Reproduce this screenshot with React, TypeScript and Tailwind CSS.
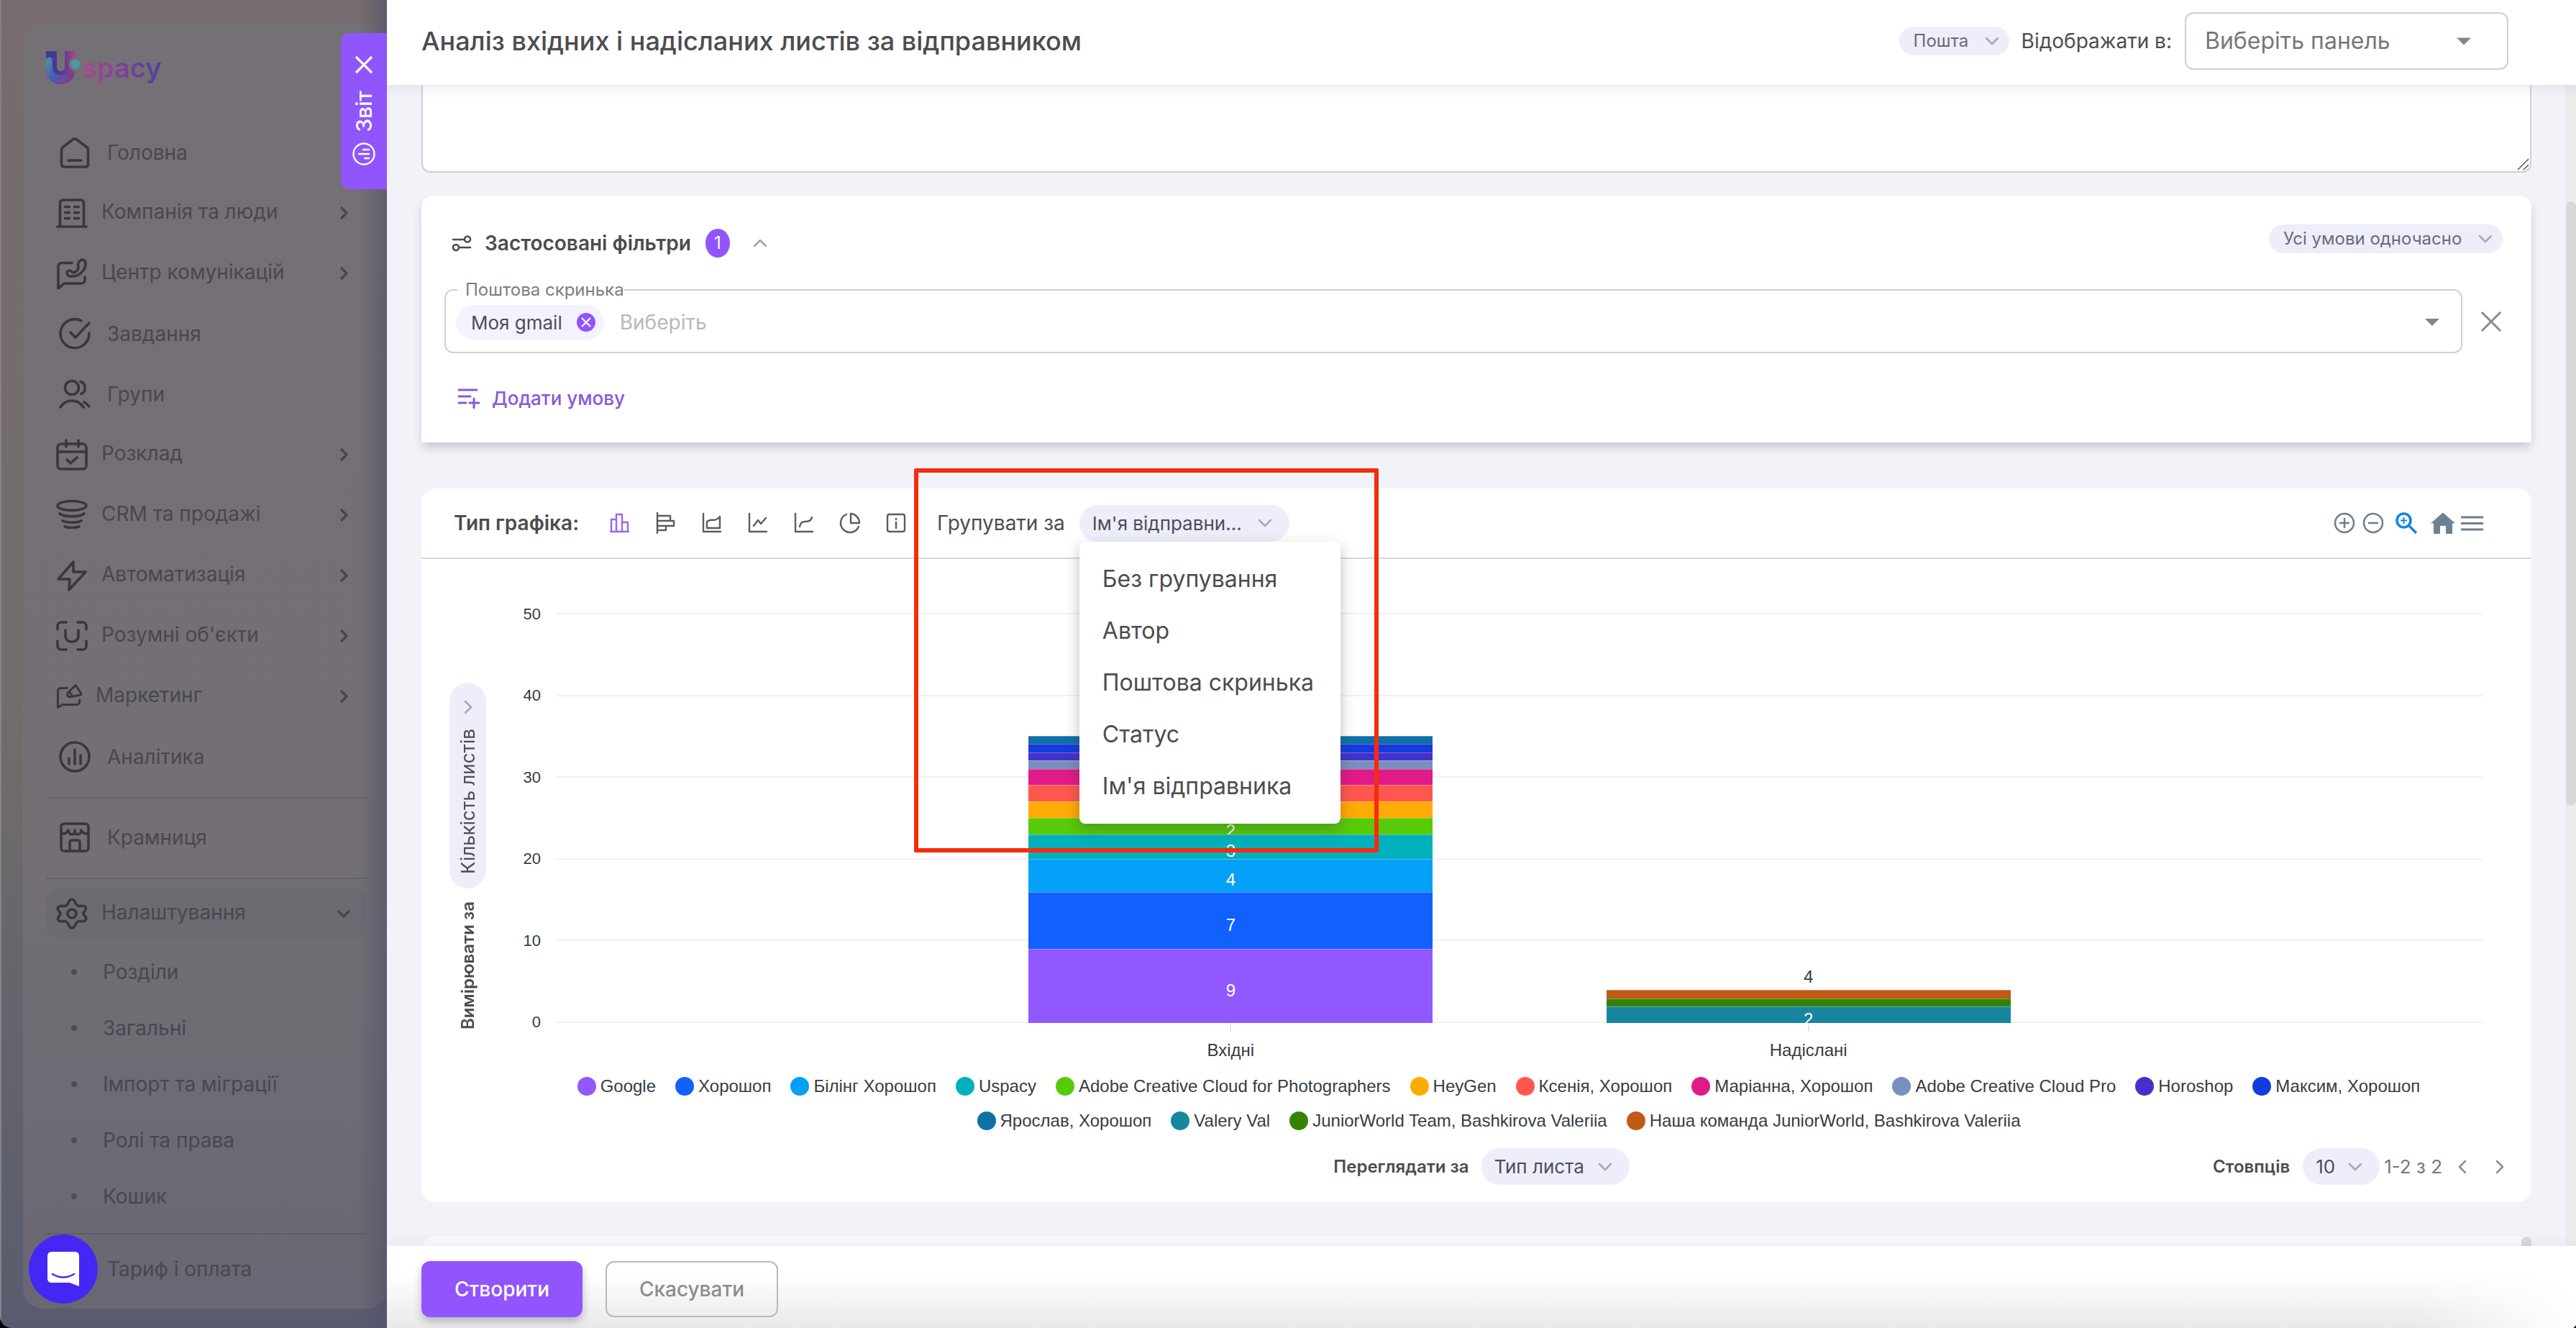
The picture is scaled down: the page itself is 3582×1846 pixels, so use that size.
import React from "react";

type IconName =
  | "home" | "company" | "comm" | "tasks" | "groups" | "calendar" | "crm"
  | "bolt" | "smart" | "marketing" | "analytics" | "store" | "settings";

const ICONS: Record<IconName, React.ReactNode> = {
  home: <path d="M3.500 18q0-2 1.600-3.200L20 3.500q2-1.400 4 0L38.900 14.800q1.600 1.200 1.600 3.200V38q0 4-4 4H7.500q-4 0-4-4ZM13 33h18" />,
  company: <path d="M1.800 41h40.400M5.500 41V8a4 4 0 0 1 4-4h25a4 4 0 0 1 4 4v33M12.500 13.500h6M25.500 13.500h6M12.500 21.500h6M25.500 21.500h6M12.500 29.500h6M25.500 29.500h6" />,
  comm: <path d="M22 7.500H8a5 5 0 0 0-5 5V43l8-7h24a5 5 0 0 0 5-5v-4M34 4c3-2 7 0 7 4 0 10-9 18-18 18-5 1-8-2-8-5 1-3 5-4 7-1l2 1c4-1 7-4 7-8-1-3 0-7 3-9Z" />,
  tasks: <path d="M31 3.800A20 20 0 1 0 42 21M16 20l7 7L42 7" />,
  groups: (
    <>
      <circle cx="18" cy="13" r="9.500" />
      <path d="M2 40c8-12 24-12 32 0M30 4.500c8 2 8 14 1 17M35 33q4 2 7 6" />
    </>
  ),
  calendar: <path d="M7 7h30a5 5 0 0 1 5 5v25a5 5 0 0 1-5 5H7a5 5 0 0 1-5-5V12a5 5 0 0 1 5-5ZM2 18h40M14 2v9M31 2v9M15 29l5 5 9-8" />,
  crm: (
    <>
      <ellipse cx="22" cy="9" rx="20" ry="6.500" />
      <path d="M5 20c6 5 28 5 34 0M9 30c5 3 21 3 26 0M12 38c5 2 15 2 20 0" />
    </>
  ),
  bolt: <path d="M24 3 3 27h16l-1 15 23-25H24Z" />,
  smart: <path d="M2 13V8a5 5 0 0 1 5-5h7M30 3h7a5 5 0 0 1 5 5v5M42 29v7a5 5 0 0 1-5 5h-7M14 41H7a5 5 0 0 1-5-5v-7M13 14v8c0 11 18 11 18 0v-8" />,
  marketing: <path d="M19 8H8a5 5 0 0 0-5 5v28l8-5h24a5 5 0 0 0 5-5v-3M33 3l11 16-20 4c-5 0-7-5-3-8ZM23 15l5 7" />,
  analytics: (
    <>
      <circle cx="22" cy="22" r="20" />
      <path d="M14 24v8M22 12v20M30 20v12" />
    </>
  ),
  store: <path d="M7 3h30a4 4 0 0 1 4 4v30a4 4 0 0 1-4 4H7a4 4 0 0 1-4-4V7a4 4 0 0 1 4-4ZM3 15q5 5 10-3 1 6 5 6 4 0 4-6 0 6 4 6t5-6q5 8 10 3M15 41V29q0-3 3-3h8q3 0 3 3v12" />,
  settings: (
    <>
      <path d="M22 2c5 0 4 7 8 9s9-2 11 2-3 6-3 9 6 5 3 9-7 0-11 2-3 9-8 9-4-7-8-9-9 2-11-2 3-6 3-9-6-5-3-9 7 0 11-2 3-9 8-9Z" />
      <circle cx="22" cy="22" r="6" />
    </>
  ),
};

function NavIcon({ name }: { name: IconName }) {
  return (
    <svg viewBox="0 0 44 44" className={name === "marketing" ? "size-9 shrink-0" : "size-11 shrink-0"} fill="none" stroke="#3a363c" strokeWidth="3.600" strokeLinecap="round" strokeLinejoin="round">
      {ICONS[name]}
    </svg>
  );
}

function Chevron({ className = "" }: { className?: string }) {
  return (
    <svg viewBox="0 0 20 12" className={"h-3 w-5 shrink-0 " + className} fill="none" stroke="currentColor" strokeWidth="2.500" strokeLinecap="round" strokeLinejoin="round">
      <path d="M2 2l8 8 8-8" />
    </svg>
  );
}

function NavItem({ icon, label, expandable = false, open = false }: { icon?: IconName; label: string; expandable?: boolean; open?: boolean }) {
  if (expandable) {
    return (
      <button type="button" aria-expanded={open} className="flex h-[84px] w-full items-center py-1.5 text-left text-[28px]">
        <span className={"flex h-full w-full items-center gap-[19px] rounded-[20px] pr-[22px] pl-3.5 " + (open ? "bg-[#6d6a72]" : "")}>
          {icon && <NavIcon name={icon} />}
          <span className="flex-1 pb-1">{label}</span>
          <svg viewBox="0 0 20 20" className={"size-5 " + (open ? "rotate-90" : "")} fill="none" stroke="#4a4650" strokeWidth="3.500" strokeLinejoin="round">
            <path d="M6 2l8 8-8 8" />
          </svg>
        </span>
      </button>
    );
  }
  return (
    <a href="#" className="flex h-[84px] items-center gap-[23px] pl-[18px] text-[28px]">
      {icon ? <NavIcon name={icon} /> : <span className="w-11" />}
      {label}
    </a>
  );
}

function Sidebar() {
  const subItems = ["Розділи", "Загальні", "Імпорт та міграції", "Ролі та права", "Кошик"];
  return (
    <aside className="relative flex w-[538px] shrink-0 flex-col overflow-hidden border-l-2 border-[#888287] bg-linear-to-b from-[#776c6f] via-[#716c6b] via-55% to-[#585c6e] pt-8 pb-[27px] pl-[30px] text-[#4a4650]">
      <div className="flex min-h-0 flex-1 flex-col rounded-[28px] bg-linear-to-b from-[#757075] via-[#736f74] via-65% to-[#686773] pr-7 pl-8">
        <div className="flex h-[138px] items-start pt-[39px]">
          <svg viewBox="0 0 50 46" className="h-[46px] w-[50px]">
            <defs>
              <linearGradient id="logoU" x1="0" y1="0" x2="1" y2="0">
                <stop offset="0" stopColor="#43369a" />
                <stop offset="0.500" stopColor="#4b3796" />
                <stop offset="1" stopColor="#a8458e" />
              </linearGradient>
              <linearGradient id="logoSwash" x1="0" y1="0" x2="1" y2="0.600">
                <stop offset="0" stopColor="#4f96a4" />
                <stop offset="0.500" stopColor="#4a5cac" />
                <stop offset="1" stopColor="#7e3c8f" />
              </linearGradient>
            </defs>
            <path fill="url(#logoU)" d="M0 0h15v22c0 8 11 8 11 0V0h15v26c0 13-10 20-20.500 20S0 38 0 26Z" />
            <path fill="url(#logoSwash)" d="M0 13c0-6 9-6 9 0v10c0 8 7 10 12 10 6 0 11-2 14-7l5 4c-2 11-10 16-19.500 16S0 40 0 26Z" />
            <circle cx="41" cy="18" r="9.500" fill="#757075" />
            <circle cx="41" cy="18" r="6.500" fill="#4f9aa8" />
          </svg>
          <span className="bg-linear-to-r from-[#ac488e] via-[#7f4198] to-[#4c3fa2] bg-clip-text pb-3 text-[38px] leading-[46px] font-semibold text-transparent">spacy</span>
        </div>
        <nav className="flex flex-col">
          <NavItem icon="home" label="Головна" />
          <NavItem icon="company" label="Компанія та люди" expandable />
          <NavItem icon="comm" label="Центр комунікацій" expandable />
          <NavItem icon="tasks" label="Завдання" />
          <NavItem icon="groups" label="Групи" />
          <NavItem icon="calendar" label="Розклад" expandable />
          <NavItem icon="crm" label="CRM та продажі" expandable />
          <NavItem icon="bolt" label="Автоматизація" expandable />
          <NavItem icon="smart" label="Розумні об'єкти" expandable />
          <NavItem icon="marketing" label="Маркетинг" expandable />
          <NavItem icon="analytics" label="Аналітика" />
          <hr className="mt-3.5 mb-3 border-t-2 border-[#666269]" />
          <NavItem icon="store" label="Крамниця" />
          <hr className="mt-3.5 mb-1.5 border-t-2 border-[#666269]" />
          <NavItem icon="settings" label="Налаштування" expandable open />
          <ul>
            {subItems.map((s) => (
              <li key={s}>
                <a href="#" className="flex h-[78px] items-center gap-9 pl-[35px] text-[28px]">
                  <span className="size-2 rounded-full bg-[#4f4b55]" />
                  {s}
                </a>
              </li>
            ))}
          </ul>
          <hr className="mt-3 mb-1.5 border-t-2 border-[#5f5c66]" />
          <NavItem label="Тариф і оплата" />
        </nav>
      </div>
      <div className="pointer-events-none absolute inset-y-0 right-0 w-10 bg-linear-to-r from-transparent to-[#54506a]/60" />
      <button type="button" aria-label="Чат" className="absolute bottom-[34px] left-[38px] flex size-24 items-center justify-center rounded-full bg-[#4527f5]">
        <svg viewBox="0 0 44 48" className="h-12 w-11">
          <path fill="#fff" d="M6 0h32q6 0 6 6v42L31 43H6q-6 0-6-6V6q0-6 6-6Z" />
          <path fill="none" stroke="#4527f5" strokeWidth="2.500" strokeLinecap="round" d="M7 31q15 9 30 0" />
        </svg>
      </button>
      <div className="absolute top-[46px] right-0 flex h-[217px] w-16 flex-col items-center gap-5 rounded-l-xl bg-[#9155fd] pt-7 text-white">
        <button type="button" aria-label="Закрити">
          <svg viewBox="0 0 32 32" className="size-8" fill="none" stroke="#fff" strokeWidth="3.200">
            <path d="M5 5l22 22M27 5L5 27" />
          </svg>
        </button>
        <span className="rotate-180 text-[30px] leading-8 font-medium [writing-mode:vertical-rl]">Звіт</span>
        <svg viewBox="0 0 32 32" className="-mt-1.5 size-8 -rotate-90" fill="none" stroke="#fff" strokeWidth="2.400" strokeLinecap="round">
          <circle cx="16" cy="16" r="14.500" />
          <path d="M10 17v6M16 9v14M22 15v8" />
        </svg>
      </div>
    </aside>
  );
}

function PillSelect({ id, value, small = false }: { id: string; value: string; small?: boolean }) {
  return (
    <span className={"relative flex items-center rounded-full bg-[#edeefa] " + (small ? "h-10 text-[24px] text-[#6b6a76]" : "h-[51px] text-[26px] text-[#4d4c58]")}>
      <select id={id} aria-label={value} className={"h-full appearance-none bg-transparent " + (small ? "pr-14 pl-5" : "pr-[62px] pl-[18px]")}>
        <option>{value}</option>
      </select>
      <Chevron className={"pointer-events-none absolute text-[#a9a8b5] " + (small ? "right-3.5" : "right-6")} />
    </span>
  );
}

function Header() {
  return (
    <header className="relative z-10 flex h-[118px] shrink-0 items-center bg-white pr-[94px] pb-1 pl-12 shadow-[0_4px_16px_rgba(90,90,140,0.12)]">
      <h1 className="flex-1 text-[36px] font-medium text-[#4c4c50]">Аналіз вхідних і надісланих листів за відправником</h1>
      <PillSelect id="source" value="Пошта" small />
      <label htmlFor="panel" className="mr-[18px] ml-[17px] text-[28px] text-[#4c4c50]">Відображати в:</label>
      <span className="relative flex items-center">
        <select id="panel" className="h-20 w-[450px] appearance-none rounded-xl border-2 border-[#d0d0d2] bg-white pl-[26px] text-[32px] text-[#77777a]">
          <option>Виберіть панель</option>
        </select>
        <svg viewBox="0 0 20 10" className="pointer-events-none absolute right-[52px] h-[11px] w-5" fill="#858588">
          <path d="M0 0h20L10 10Z" />
        </svg>
      </span>
    </header>
  );
}

function Filters() {
  return (
    <section className="mt-8 flex flex-col rounded-t-2xl bg-white pt-10 pr-10 pb-[38px] pl-8 shadow-[0_8px_14px_-2px_rgba(70,70,90,0.28)]">
      <div className="flex h-[52px] items-start justify-between pl-2.5">
        <button type="button" className="flex h-full items-center text-[28px] font-semibold text-[#4c4c50]">
          <svg viewBox="0 0 28 24" className="mr-[18px] h-6 w-7" fill="none" stroke="#4c4c50" strokeWidth="2.600" strokeLinecap="round">
            <path d="M2 7h15M11 18h15" />
            <circle cx="22" cy="6.500" r="4" />
            <circle cx="6" cy="18" r="4" />
          </svg>
          Застосовані фільтри
          <span className="ml-5 flex h-10 w-[34px] items-center justify-center rounded-[50%] bg-[#9155fd] text-[24px] font-normal text-white">1</span>
          <Chevron className="ml-8 rotate-180 text-[#a3a3a8]" />
        </button>
        <PillSelect id="match" value="Усі умови одночасно" small />
      </div>
      <div className="mt-[25px] flex items-end">
        <fieldset className="relative min-w-0 flex-1 rounded-xl border-2 border-[#d0d0d2] px-4 pb-[10px]">
          <legend className="pl-[11px] text-[24px] leading-7 text-[#7d7d80]">
            <label htmlFor="mailbox">Поштова скринька</label>
          </legend>
          <div className="flex h-[62px] items-center">
            <span className="-ml-0.5 flex h-12 items-center gap-5 rounded-full bg-[#f5f2ff] pr-3 pl-[21px] text-[26px] text-[#4d4c58]">
              Моя gmail
              <button type="button" aria-label="Прибрати">
                <svg viewBox="0 0 26 26" className="size-[26px]">
                  <circle cx="13" cy="13" r="13" fill="#9155fd" />
                  <path d="M7 7l12 12M19 7L7 19" stroke="#fff" strokeWidth="2.200" />
                </svg>
              </button>
            </span>
            <input id="mailbox" placeholder="Виберіть" className="ml-[22px] min-w-0 flex-1 text-[28px] outline-none placeholder:text-[#b9b9bb]" />
            <svg viewBox="0 0 20 10" className="mr-3.5 h-[10px] w-5" fill="#858588">
              <path d="M0 0h20L10 10Z" />
            </svg>
          </div>
        </fieldset>
        <button type="button" aria-label="Видалити умову" className="mb-7 ml-6">
          <svg viewBox="0 0 32 32" className="size-8" fill="none" stroke="#8a8a8d" strokeWidth="3">
            <path d="M3 3l26 26M29 3L3 29" />
          </svg>
        </button>
      </div>
      <button type="button" className="mt-[38px] ml-[18px] flex h-12 items-center gap-4 self-start text-[26px] font-medium text-[#8a57dc]">
        <svg viewBox="0 0 32 30" className="h-[30px] w-8" fill="none" stroke="#8a57dc" strokeWidth="3" strokeLinecap="round">
          <path d="M2 4h25M2 13h16M2 22h10M23 16v13M17 22h13" />
        </svg>
        Додати умову
      </button>
    </section>
  );
}

const SERIES = [
  { name: "Google", dot: "bg-[#9158ff]" },
  { name: "Хорошоп", dot: "bg-[#1061fd]" },
  { name: "Білінг Хорошоп", dot: "bg-[#05a0f7]" },
  { name: "Uspacy", dot: "bg-[#00b0bc]" },
  { name: "Adobe Creative Cloud for Photographers", dot: "bg-[#57cb08]" },
  { name: "HeyGen", dot: "bg-[#ffaa05]" },
  { name: "Ксенія, Хорошоп", dot: "bg-[#ff5750]" },
  { name: "Маріанна, Хорошоп", dot: "bg-[#e01a87]" },
  { name: "Adobe Creative Cloud Pro", dot: "bg-[#7890bd]" },
  { name: "Horoshop", dot: "bg-[#4530cd]" },
  { name: "Максим, Хорошоп", dot: "bg-[#143cdc]" },
  { name: "Ярослав, Хорошоп", dot: "bg-[#0f70a6]" },
  { name: "Valery Val", dot: "bg-[#17869e]" },
  { name: "JuniorWorld Team, Bashkirova Valeriia", dot: "bg-[#358305]" },
  { name: "Наша команда JuniorWorld, Bashkirova Valeriia", dot: "bg-[#c05a14]" },
];

const BARS = [
  { label: "Вхідні", values: [9, 7, 4, 3, 2, 2, 2, 2, 1, 1, 1, 1, 0, 0, 0], total: "" },
  { label: "Надіслані", values: [0, 0, 0, 0, 0, 0, 0, 0, 0, 0, 0, 0, 2, 1, 1], total: "4" },
];

const MAX = 50;

const CHART_TYPES = [
  { label: "Стовпчики", active: true, d: "M3 10h7v17H3ZM10 3h8v24h-8ZM18 14h8v13h-8ZM2 27h25" },
  { label: "Смуги", active: false, d: "M3 1v28M3 5h18v7H3M3 12h23v7H3M3 19h12v6H3" },
  { label: "Області", active: false, d: "M3 2v25h24M8 22V13q5-3 9-2 5 0 9-5v16Z" },
  { label: "Лінії", active: false, d: "M3 2v25h24M9 19l6-8 4 5 7-8" },
  { label: "Криві", active: false, d: "M3 2v25h24M9 20q1-7 8-7 8 0 9-6" },
  { label: "Кругова", active: false, d: "M10 3a13 13 0 1 0 17 17M16 2v13h12A13 13 0 0 0 16 2Z" },
  { label: "Показник", active: false, d: "M6 3h18q3 0 3 3v18q0 3-3 3H6q-3 0-3-3V6q0-3 3-3ZM15 14v8M15 9v1" },
];

const GROUPS = ["Без групування", "Автор", "Поштова скринька", "Статус", "Ім'я відправника"];

function ChartToolbar() {
  return (
    <div className="flex h-[98px] items-center border-b-2 border-[#d6d7e1] pr-[67px] pl-[45px] text-[28px] text-[#4c4c50]">
      <span className="font-semibold">Тип графіка:</span>
      <div className="mx-[42px] flex items-center gap-[34px]">
        {CHART_TYPES.map((t) => (
          <button key={t.label} type="button" aria-label={t.label} className={t.active ? "text-[#9b66f0]" : "text-[#5c5c60]"}>
            <svg viewBox="0 0 30 30" className="size-[30px]" fill="none" stroke="currentColor" strokeWidth="2.400" strokeLinecap="round" strokeLinejoin="round">
              <path d={t.d} />
            </svg>
          </button>
        ))}
      </div>
      <span id="groupLabel">Групувати за</span>
      <div className="relative z-20 ml-5">
        <button type="button" aria-haspopup="listbox" aria-expanded="true" aria-labelledby="groupLabel" className="flex h-[51px] w-[292px] items-center justify-between rounded-full bg-[#edeefa] pr-6 pl-[18px] text-[26px] text-[#4d4c58]">
          Ім'я відправни...
          <Chevron className="text-[#a9a8b5]" />
        </button>
        <ul role="listbox" aria-labelledby="groupLabel" className="absolute top-full left-0 w-[363px] rounded-lg bg-white py-4 text-[32px] shadow-[0_8px_20px_rgba(50,50,70,0.32)]">
          {GROUPS.map((g) => (
            <li key={g} role="option" aria-selected={g === "Ім'я відправника"} className="flex h-[72px] items-center px-8 whitespace-nowrap">{g}</li>
          ))}
        </ul>
      </div>
      <div className="ml-auto flex items-center text-[#6e7f90]">
        <button type="button" aria-label="Збільшити" className="mr-2">
          <svg viewBox="0 0 32 32" className="size-8" fill="none" stroke="#6e7b8a" strokeWidth="2.500"><circle cx="16" cy="16" r="13" /><path d="M9 16h14M16 9v14" /></svg>
        </button>
        <button type="button" aria-label="Зменшити" className="mr-3.5">
          <svg viewBox="0 0 32 32" className="size-8" fill="none" stroke="#6e7b8a" strokeWidth="2.500"><circle cx="16" cy="16" r="13" /><path d="M9 16h14" /></svg>
        </button>
        <button type="button" aria-label="Масштаб виділенням" className="mr-[18px]">
          <svg viewBox="0 0 32 32" className="size-8" fill="none" stroke="#0f88e3" strokeWidth="3.600"><circle cx="12.500" cy="12.500" r="9.500" /><path d="M20 20l10 10" /><path strokeWidth="2" d="M8 12.500h9M12.500 8v9" /></svg>
        </button>
        <button type="button" aria-label="Скинути" className="mr-2">
          <svg viewBox="0 0 34 32" className="h-8 w-[34px]" fill="#6e8192"><path d="M17 1.500 34 16.500H30V31H21V20H13V31H4V16.500H0Z" /></svg>
        </button>
        <button type="button" aria-label="Меню">
          <svg viewBox="0 0 31 32" className="h-8 w-[31px]" stroke="#6e7f8e" strokeWidth="3"><path d="M0 8h31M0 16.500h31M0 25h31" /></svg>
        </button>
      </div>
    </div>
  );
}

function Chart() {
  return (
    <div className="flex gap-10 pr-[68px] pl-[39px]">
      <div className="flex w-[51px] shrink-0 flex-col items-center gap-[18px] pt-[172px]">
        <button type="button" aria-labelledby="measureLabel measureValue" className="flex h-[286px] w-full flex-col items-center rounded-full bg-[#edeefa] pt-[28px] text-[#4d4c58]">
          <Chevron className="-rotate-90 text-[#a9a8b5]" />
          <span id="measureValue" className="mt-6 rotate-180 text-[26px] leading-8 whitespace-nowrap [writing-mode:vertical-rl]">Кількість листів</span>
        </button>
        <span id="measureLabel" className="rotate-180 text-[24px] leading-8 font-semibold whitespace-nowrap text-[#4c4c50] [writing-mode:vertical-rl]">Вимірювати за</span>
      </div>
      <div className="flex min-w-0 flex-1 flex-col pt-[75px] font-['Liberation_Sans',sans-serif] text-[24px] text-[#373d3f]">
        <div className="flex h-[570px]">
          <div className="flex w-9 flex-col justify-between text-right text-[22px]">
            {[50, 40, 30, 20, 10, 0].map((n) => (
              <span key={n} className="flex h-0.5 items-center justify-end">{n}</span>
            ))}
          </div>
          <div className="relative ml-[22px] flex-1">
            <div className="absolute inset-0 flex flex-col justify-between">
              {[50, 40, 30, 20, 10, 0].map((n) => (
                <span key={n} className="h-0.5 bg-[#f1f1f2]" />
              ))}
            </div>
            <div className="relative flex h-full justify-center">
              {BARS.map((b) => (
                <div key={b.label} className="flex h-full w-[30%] flex-col-reverse items-center">
                  {b.values.map((v, i) =>
                    v > 0 ? (
                      <div key={SERIES[i].name} style={{ height: `${(v / MAX) * 100}%` }} className={"flex w-[70%] shrink-0 items-center justify-center border-t border-white/30 leading-none text-white " + SERIES[i].dot}>
                        {v > 1 && <span className="mt-3 flex h-0 items-center">{v}</span>}
                      </div>
                    ) : null
                  )}
                  {b.total && <span className="mb-1 leading-7">{b.total}</span>}
                </div>
              ))}
            </div>
          </div>
        </div>
        <div className="flex justify-center pl-[58px]">
          {BARS.map((b) => (
            <div key={b.label} className="flex w-[30%] flex-col items-center">
              <span className="h-3 w-0.5 bg-[#e4e5e8]" />
              <span className="mt-3 leading-7">{b.label}</span>
            </div>
          ))}
        </div>
        <ul className="mt-[22px] flex flex-wrap justify-center gap-x-[27px] gap-y-5">
          {SERIES.map((s) => (
            <li key={s.name} className="flex items-center gap-1.5 leading-7">
              <span className={"size-[26px] rounded-full " + s.dot} />
              {s.name}
            </li>
          ))}
        </ul>
      </div>
    </div>
  );
}

function ChartFooter() {
  return (
    <div className="mt-6 grid grid-cols-[1fr_auto_1fr] items-center pr-7 pb-6 pl-[42px] text-[#4c4c50]">
      <span />
      <div className="flex items-center gap-[17px]">
        <label htmlFor="view" className="text-[24px] font-semibold">Переглядати за</label>
        <PillSelect id="view" value="Тип листа" />
      </div>
      <div className="flex items-center justify-end">
        <label htmlFor="cols" className="mr-[18px] text-[24px] font-semibold">Стовпців</label>
        <PillSelect id="cols" value="10" />
        <span className="ml-1.5 text-[26px] text-[#77777a]">1-2 з 2</span>
        <button type="button" aria-label="Назад" className="ml-3.5 flex w-7 justify-center">
          <Chevron className="rotate-90 text-[#8d8d92]" />
        </button>
        <button type="button" aria-label="Вперед" className="mr-0.5 ml-6 flex w-7 justify-center">
          <Chevron className="-rotate-90 text-[#8d8d92]" />
        </button>
      </div>
    </div>
  );
}

export default function App() {
  return (
    <div className="h-screen bg-black font-['Inter',sans-serif]">
      <div className="flex h-full overflow-hidden rounded-br-[6px] rounded-bl-2xl">
        <Sidebar />
        <main className="flex min-w-0 flex-1 flex-col">
          <Header />
          <div className="flex min-h-0 flex-1 bg-[#f2f3f9]">
            <div className="min-w-0 flex-1 overflow-hidden px-12">
              <div className="relative">
                <textarea aria-label="Опис" className="block h-[122px] w-full resize-none rounded-b-xl border-2 border-t-0 border-[#d0d0d2] bg-white outline-none" />
                <svg viewBox="0 0 18 18" className="absolute right-0.5 bottom-0.5 size-[18px]" stroke="#55555a" strokeWidth="1.500">
                  <path d="M1 16 16 1M9 16l7-7" />
                </svg>
              </div>
              <Filters />
              <section className="relative mt-16 rounded-[20px] bg-white">
                <ChartToolbar />
                <Chart />
                <ChartFooter />
                <div className="pointer-events-none absolute -top-7 left-[685px] z-30 h-[534px] w-[646px] rounded-xs border-[6px] border-[#f52c0b]" />
              </section>
              <section className="mt-12 flex h-20 justify-end rounded-[20px] bg-[#fbfbfd]">
                <span className="h-full w-3.5 rounded-full bg-[#d9d9da]" />
              </section>
            </div>
            <div className="w-3.5 shrink-0 bg-[#ececed] pt-[162px]">
              <div className="h-[840px] rounded-full bg-[#d8d8d9]" />
            </div>
          </div>
          <footer className="relative z-10 flex h-[114px] shrink-0 items-start gap-8 bg-white bg-linear-to-b from-white from-35% to-[#e9e9e9] pt-[21px] pl-12 shadow-[0_-4px_16px_rgba(90,90,140,0.08)]">
            <button type="button" className="h-[78px] w-56 rounded-xl bg-[#9155fd] text-[28px] font-medium text-white shadow-[0_6px_12px_rgba(60,50,90,0.3)]">Створити</button>
            <button type="button" className="h-[78px] w-60 rounded-xl border-2 border-[#b9b9bc] text-[28px] font-medium text-[#8c8c90]">Скасувати</button>
            <div className="absolute inset-y-0 right-0 w-[220px] bg-linear-to-r from-transparent to-white" />
          </footer>
        </main>
      </div>
    </div>
  );
}
